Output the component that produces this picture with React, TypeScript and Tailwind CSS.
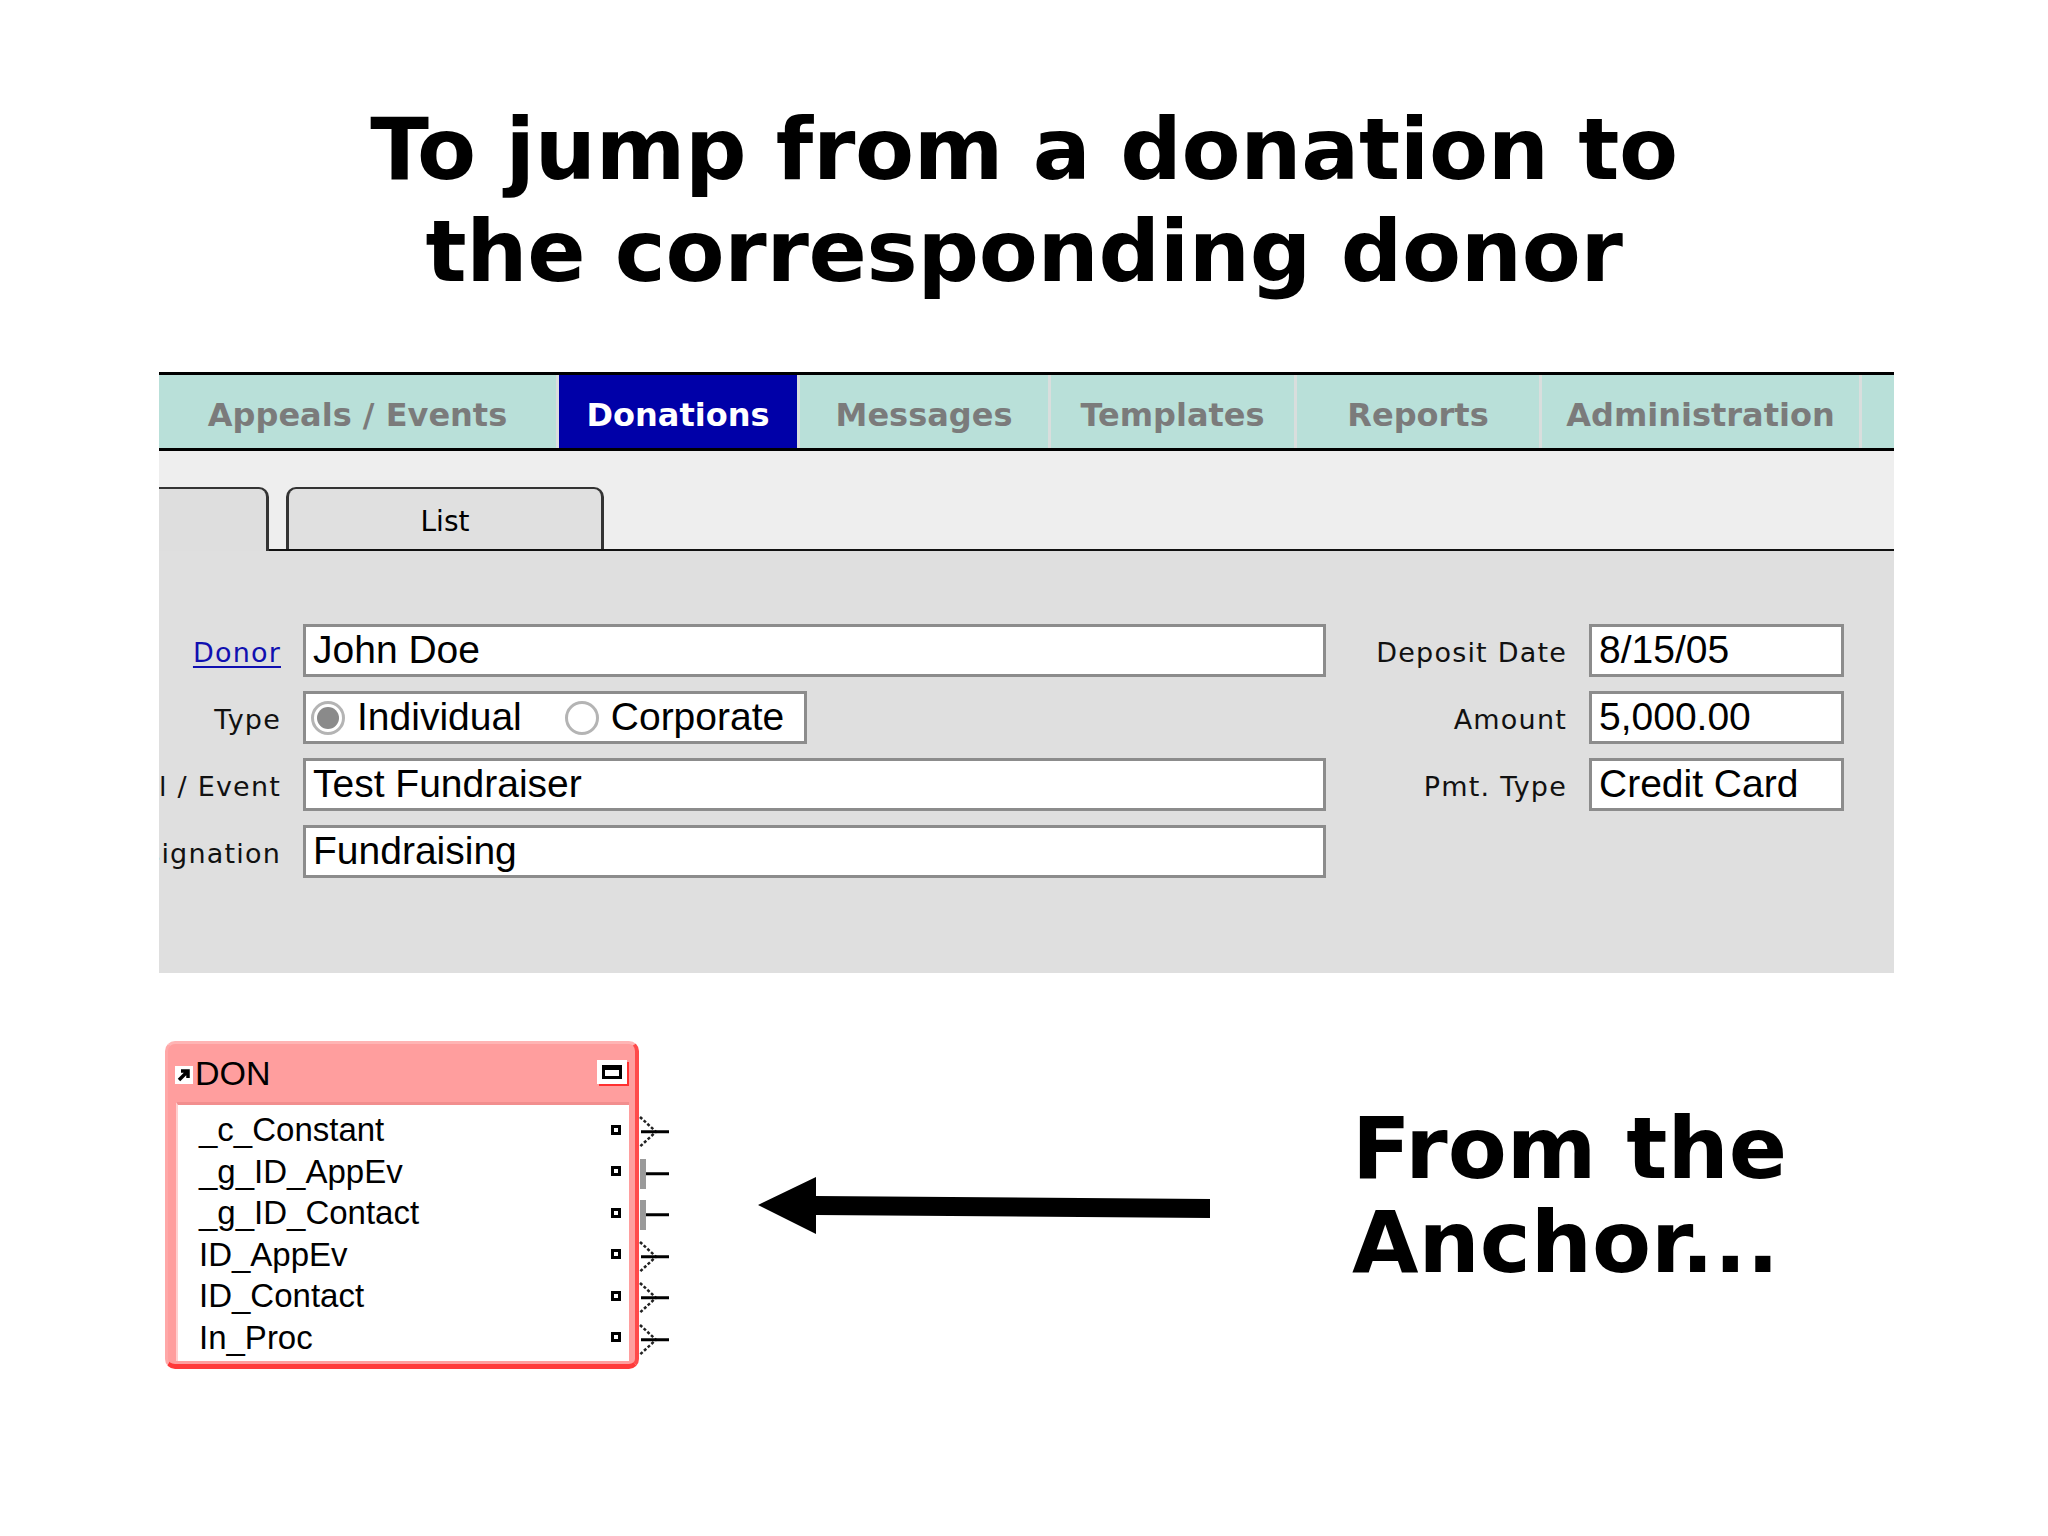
import type { ReactNode } from "react";

const tabs: Array<{ label: string; width: string; active?: boolean }> = [
  { label: "Appeals / Events", width: "w-[400px]" },
  { label: "Donations", width: "w-[241px]", active: true },
  { label: "Messages", width: "w-[251px]" },
  { label: "Templates", width: "w-[246px]" },
  { label: "Reports", width: "w-[245px]" },
  { label: "Administration", width: "w-[320px]" },
];

const fields = ["_c_Constant", "_g_ID_AppEv", "_g_ID_Contact", "ID_AppEv", "ID_Contact", "In_Proc"];
// crow's foot = many, bar = one
const links: Array<"many" | "one"> = ["many", "one", "one", "many", "many", "many"];

function Label({ children, width }: { children: ReactNode; width: string }) {
  return (
    <div className={`${width} flex shrink-0 justify-end overflow-hidden pt-[6px]`}>
      <span className="shrink-0 whitespace-nowrap text-[27px] tracking-[1.2px] text-[#111]">
        {children}
      </span>
    </div>
  );
}

function Field({ value, width }: { value: string; width: string }) {
  return (
    <div
      className={`${width} flex h-[53px] items-center border-[3px] border-[#8c8c8c] bg-white pl-[7px] font-['Liberation_Sans',sans-serif] text-[39px] text-black`}
    >
      {value}
    </div>
  );
}

function Radio({ checked }: { checked?: boolean }) {
  return (
    <span className="flex h-[34px] w-[34px] shrink-0 items-center justify-center rounded-full border-[3px] border-[#b4b4b4] bg-white">
      {checked && <span className="h-[22px] w-[22px] rounded-full bg-[#8a8a8a]" />}
    </span>
  );
}

function Connector({ kind }: { kind: "many" | "one" }) {
  return (
    <svg width="30" height="41.5" viewBox="0 0 30 41.5" className="block">
      {kind === "many" ? (
        <>
          <path d="M1 6 L17 20.75 L1 35.5" fill="none" stroke="#222" strokeWidth="2.5" strokeDasharray="3 2" />
          <path d="M2 20.75 H30" stroke="#000" strokeWidth="3" />
        </>
      ) : (
        <>
          <rect x="1" y="6" width="6" height="30" fill="#9a9a9a" />
          <path d="M7 20.75 H30" stroke="#000" strokeWidth="3" />
        </>
      )}
    </svg>
  );
}

function TableBox() {
  return (
    <div className="flex">
      <div className="flex h-[328px] w-[474px] flex-col rounded-[10px] border-t-[3px] border-l-[3px] border-r-[4px] border-b-[5px] border-t-[#ffb4b4] border-l-[#ffa8a8] border-r-[#ff4a4a] border-b-[#ff3a3a] bg-[#ff9e9e]">
        <div className="flex h-[58px] items-center pl-[7px] pr-[8px]">
          <svg width="18" height="18" viewBox="0 0 18 18" className="mr-[2px] mt-[4px]">
            <rect width="18" height="18" fill="#fff" />
            <path d="M4 14 L12 6 M6 5 H13 V12" stroke="#000" strokeWidth="3.5" fill="none" />
          </svg>
          <span className="font-['Liberation_Sans',sans-serif] text-[34px] leading-none text-black">DON</span>
          <span className="ml-auto mb-[2px] flex h-[24px] w-[30px] items-center justify-center bg-white shadow-[2px_2px_0_#ff3030]">
            <span className="h-[14px] w-[20px] border-[3px] border-t-[5px] border-black bg-white" />
          </span>
        </div>
        <div className="ml-[8px] mr-[6px] mb-[3px] flex flex-1 flex-col border-t-[3px] border-l-2 border-t-[#f28e8e] border-l-[#ffd0d0] bg-white pt-[4px]">
          {fields.map((f) => (
            <div key={f} className="flex h-[41.5px] items-center pl-[21px] pr-[8px]">
              <span className="flex-1 font-['Liberation_Sans',sans-serif] text-[33px] leading-none text-black">{f}</span>
              <span className="h-[10px] w-[10px] border-[3px] border-black bg-white" />
            </div>
          ))}
        </div>
      </div>
      <div className="flex flex-col pt-[70px]">
        {links.map((k, i) => (
          <Connector key={i} kind={k} />
        ))}
      </div>
    </div>
  );
}

export default function App() {
  return (
    <div className="h-[1536px] w-[2048px] overflow-hidden bg-white font-['DejaVu_Sans',sans-serif]">
      <h1 className="pt-[98px] text-center text-[86px] font-bold leading-[102px] tracking-[-0.3px] text-black">
        To jump from a donation to
        <br />
        the corresponding donor
      </h1>

      <div className="ml-[159px] mt-[70px] w-[1735px]">
        {/* main tab bar */}
        <div className="flex h-[79px] border-y-[3px] border-black bg-[#b9e0d9]">
          {tabs.map((t) => (
            <div
              key={t.label}
              className={`${t.width} flex items-center justify-center border-r-[3px] border-[#d9dedd] pt-[6px] text-[32px] font-bold ${
                t.active ? "bg-[#0000a8] text-white" : "text-[#7b7b7b]"
              }`}
            >
              {t.label}
            </div>
          ))}
        </div>

        {/* sub tabs */}
        <div className="flex h-[100px] items-end bg-[#eeeeee]">
          <div className="h-[64px] w-[110px] rounded-tr-[10px] border-t-2 border-r-[3px] border-[#333] bg-[#dedede]" />
          <div className="flex flex-1 items-end border-b-2 border-[#111]">
            <div className="ml-[17px] flex h-[62px] w-[318px] items-center justify-center rounded-t-[10px] border-t-2 border-x-[3px] border-[#333] bg-[#e0e0e0] pt-[6px] text-[28px] text-black">
              List
            </div>
          </div>
        </div>

        {/* form */}
        <div className="flex h-[422px] bg-[#dfdfdf] pt-[73px]">
          <div className="flex flex-col gap-[14px]">
            <div className="flex items-center gap-[22px]">
              <Label width="w-[122px]">
                <span className="text-[#1010b0] underline decoration-2 underline-offset-4">Donor</span>
              </Label>
              <Field value="John Doe" width="w-[1023px]" />
            </div>
            <div className="flex items-center gap-[22px]">
              <Label width="w-[122px]">Type</Label>
              <div className="flex h-[53px] w-[504px] items-center border-[3px] border-[#8c8c8c] bg-white pl-[5px] font-['Liberation_Sans',sans-serif] text-[39px] text-black">
                <Radio checked />
                <span className="ml-[12px]">Individual</span>
                <span className="ml-[43px]">
                  <Radio />
                </span>
                <span className="ml-[12px]">Corporate</span>
              </div>
            </div>
            <div className="flex items-center gap-[22px]">
              <Label width="w-[122px]">Appeal / Event</Label>
              <Field value="Test Fundraiser" width="w-[1023px]" />
            </div>
            <div className="flex items-center gap-[22px]">
              <Label width="w-[122px]">Designation</Label>
              <Field value="Fundraising" width="w-[1023px]" />
            </div>
          </div>

          <div className="ml-[21px] flex flex-col gap-[14px]">
            <div className="flex items-center gap-[22px]">
              <Label width="w-[220px]">Deposit Date</Label>
              <Field value="8/15/05" width="w-[255px]" />
            </div>
            <div className="flex items-center gap-[22px]">
              <Label width="w-[220px]">Amount</Label>
              <Field value="5,000.00" width="w-[255px]" />
            </div>
            <div className="flex items-center gap-[22px]">
              <Label width="w-[220px]">Pmt. Type</Label>
              <Field value="Credit Card" width="w-[255px]" />
            </div>
          </div>
        </div>
      </div>

      {/* relationship graph + caption */}
      <div className="mt-[68px] flex items-start pl-[165px]">
        <TableBox />
        <svg width="452" height="60" viewBox="0 0 452 60" className="ml-[89px] mt-[134px]">
          <polygon points="0,30 58,2 58,21 452,24 452,43 58,40 58,59" fill="#000" />
        </svg>
        <div className="ml-[142px] mt-[60px] text-[86px] font-bold leading-[94px] text-black">
          From the
          <br />
          Anchor...
        </div>
      </div>
    </div>
  );
}
